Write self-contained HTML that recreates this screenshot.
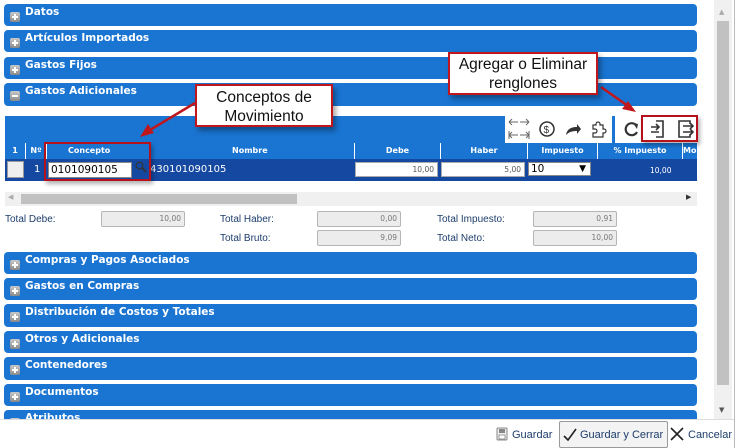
<!DOCTYPE html>
<html><head><meta charset="utf-8"><style>
*{margin:0;padding:0;box-sizing:border-box}
body{width:738px;height:448px;overflow:hidden;background:#fff;position:relative;font-family:"DejaVu Sans",Verdana,sans-serif}
.a{position:absolute}
.p{position:absolute;left:4px;width:693px;height:22px;background:#1a75d2;border-radius:4px;color:#fff;font-weight:bold;font-size:10.5px;padding:2px 0 0 21px}
.p i{position:absolute;left:6px;top:8px;width:10px;height:10px;background:linear-gradient(#c8c8c8,#8a8a8a);border-radius:2px}
.p i:before{content:"";position:absolute;left:2px;top:4px;width:6px;height:2px;background:#fff}
.p i.pl:after{content:"";position:absolute;left:4px;top:2px;width:2px;height:6px;background:#fff}
.th{position:absolute;top:143px;height:16px;color:#fff;font-size:8px;font-weight:bold;text-align:center;line-height:16px;border-right:1px solid #fff}
.in{position:absolute;background:#fff;border:1px solid #aaa;font-size:7.5px;text-align:right;padding-right:3px;line-height:13px;color:#555}
.tl{position:absolute;font-family:"Liberation Sans",sans-serif;font-size:10px;color:#1d3d6b}
.tb{position:absolute;width:84px;height:16px;background:#ececec;border:1px solid #b5b5b5;border-radius:2px;font-size:7.5px;color:#777;text-align:right;padding-right:3px;line-height:14px}
.call{position:absolute;background:#fff;border:2px solid #c0161c;box-shadow:3px 4px 5px rgba(0,0,0,.35);font-family:"Liberation Sans",sans-serif;font-size:15.5px;text-align:center;line-height:19px;color:#111}
</style></head><body>
<div class="p" style="top:4px"><i class="pl"></i>Datos</div>
<div class="p" style="top:30px"><i class="pl"></i>Artículos Importados</div>
<div class="p" style="top:57px"><i class="pl"></i>Gastos Fijos</div>
<div class="p" style="top:83px;height:23px"><i></i>Gastos Adicionales</div>

<div class="a" style="left:5px;top:116px;width:500px;height:27px;background:#1a75d2"></div>
<div class="a" style="left:612px;top:116px;width:3px;height:27px;background:#1a75d2"></div>
<svg class="a" style="left:505px;top:115px" width="192" height="28" viewBox="0 0 192 28" fill="none" stroke="#333" stroke-width="1.5">
<path d="M4 7h9M4 7l3-3M4 7l3 3M15 7h9M24 7l-3-3M24 7l-3 3" stroke="#666" stroke-width="1"/>
<path d="M4 20h9M7 17l-3 3 3 3M4 16v8M15 20h9M21 17l3 3-3 3M24 16v8" stroke="#666" stroke-width="1"/>
<circle cx="42" cy="14" r="7"/><text x="38.5" y="18" font-size="10" fill="#333" stroke="none" font-family="Liberation Sans">$</text>
<path d="M61 20c1-6 5-8 11-8v-3l4 5-4 5v-3c-5 0-8 1-11 4z" fill="#333" stroke="none"/>
<path d="M88 22v-4h2a2 2 0 1 0 0-4h-2v-4h3v-1a2 2 0 1 1 4 0v1h3v4h1a2 2 0 1 1 0 4h-1v4z" stroke-width="1.2"/>
<path d="M131 10a6 6 0 1 0 1 7" stroke-width="2.2"/><path d="M128 8l5 1-1 5z" fill="#333" stroke="none"/>
<path d="M151 6h7v16h-7M146 12h8M151 9l3 3-3 3M146 17h8" stroke-width="1.6"/>
<path d="M185 9v-3h-11v16h11v-3M178 11h10M185 8l3 3-3 3M178 17h10M185 14l3 3-3 3" stroke-width="1.6"/>
</svg>

<div class="a" style="left:5px;top:143px;width:692px;height:16px;background:#1a75d2"></div>
<div class="th" style="left:5px;width:21px">1</div>
<div class="th" style="left:26px;width:21px">Nº</div>
<div class="th" style="left:47px;width:308px;text-align:left;padding-left:21px">Concepto</div>
<div class="a" style="left:232px;top:143px;color:#fff;font-size:8px;font-weight:bold;line-height:16px">Nombre</div>
<div class="th" style="left:355px;width:86px">Debe</div>
<div class="th" style="left:441px;width:87px">Haber</div>
<div class="th" style="left:528px;width:70px">Impuesto</div>
<div class="th" style="left:598px;width:85px">% Impuesto</div>
<div class="th" style="left:683px;width:14px;border:0;text-align:left">Mo</div>

<div class="a" style="left:5px;top:159px;width:692px;height:22px;background:#1548a0"></div>
<div class="a" style="left:7px;top:161px;width:17px;height:17px;background:#eee;border:1px solid #999"></div>
<div class="a" style="left:34px;top:164px;color:#fff;font-size:10px">1</div>
<div class="a" style="left:48px;top:162px;width:84px;height:16px;background:#fff;border:1px solid #888;font-size:10.5px;padding-left:2px;line-height:14px;color:#000">0101090105</div>
<svg class="a" style="left:135px;top:161px" width="12" height="12"><circle cx="4.5" cy="4.5" r="3.3" fill="none" stroke="#333" stroke-width="1.2"/><path d="M7 7l4 4" stroke="#333" stroke-width="1.8"/></svg>
<div class="a" style="left:150px;top:164px;color:#fff;font-size:10px">430101090105</div>
<div class="in" style="left:355px;top:162px;width:83px;height:15px">10,00</div>
<div class="in" style="left:441px;top:162px;width:84px;height:15px">5,00</div>
<div class="a" style="left:528px;top:162px;width:63px;height:14px;background:#fff;border:1px solid #888;font-size:10.5px;line-height:12px;padding-left:2px">10<span style="position:absolute;right:4px;font-size:9px">▼</span></div>
<div class="a" style="left:650px;top:166px;color:#fff;font-size:7.5px">10,00</div>

<div class="a" style="left:5px;top:192px;width:692px;height:14px;background:#f0f0f0"></div>
<div class="a" style="left:21px;top:194px;width:276px;height:10px;background:#c1c1c1"></div>
<div class="a" style="left:8px;top:193px;font-size:7px;color:#aaa">◀</div>
<div class="a" style="left:686px;top:193px;font-size:7px;color:#333">▶</div>

<div class="tl" style="left:5px;top:214px">Total Debe:</div>
<div class="tb" style="left:101px;top:211px">10,00</div>
<div class="tl" style="left:220px;top:214px">Total Haber:</div>
<div class="tb" style="left:317px;top:211px">0,00</div>
<div class="tl" style="left:437px;top:214px">Total Impuesto:</div>
<div class="tb" style="left:533px;top:211px">0,91</div>
<div class="tl" style="left:220px;top:233px">Total Bruto:</div>
<div class="tb" style="left:317px;top:230px">9,09</div>
<div class="tl" style="left:437px;top:233px">Total Neto:</div>
<div class="tb" style="left:533px;top:230px">10,00</div>

<div class="p" style="top:252px"><i class="pl"></i>Compras y Pagos Asociados</div>
<div class="p" style="top:278px"><i class="pl"></i>Gastos en Compras</div>
<div class="p" style="top:304px;height:23px"><i class="pl"></i>Distribución de Costos y Totales</div>
<div class="p" style="top:331px"><i class="pl"></i>Otros y Adicionales</div>
<div class="p" style="top:357px;height:23px"><i class="pl"></i>Contenedores</div>
<div class="p" style="top:384px"><i class="pl"></i>Documentos</div>
<div class="p" style="top:410px"><i class="pl"></i>Atributos</div>

<div class="a" style="left:714px;top:0;width:18px;height:419px;background:#f0f0f0"></div>
<div class="a" style="left:717px;top:21px;width:12px;height:364px;background:#c1c1c1"></div>
<div class="a" style="left:719px;top:8px;font-size:7px;color:#aaa">▲</div>
<div class="a" style="left:719px;top:406px;font-size:7px;color:#555">▼</div>
<div class="a" style="left:734px;top:0;width:1px;height:448px;background:#bbb"></div>

<div class="a" style="left:0;top:419px;width:734px;height:29px;background:#fff;border-top:1px solid #ddd"></div>
<svg class="a" style="left:496px;top:427px" width="12" height="14"><rect x="1" y="1" width="10" height="12" rx="1" fill="#eee" stroke="#888"/><rect x="3" y="2" width="6" height="4" fill="#888"/><rect x="3" y="8" width="6" height="4" fill="#fff" stroke="#888" stroke-width=".8"/></svg>
<div class="tl" style="left:512px;top:429px;font-size:11px">Guardar</div>
<div class="a" style="left:559px;top:421px;width:109px;height:27px;border:1px solid #999;border-radius:2px;background:#f3f3f3"></div>
<svg class="a" style="left:563px;top:428px" width="14" height="14"><path d="M1 8l4 4 8-11" fill="none" stroke="#222" stroke-width="1.6"/></svg>
<div class="tl" style="left:580px;top:429px;font-size:11px">Guardar y Cerrar</div>
<svg class="a" style="left:670px;top:427px" width="14" height="14"><path d="M1 1l12 12M13 1L1 13" stroke="#222" stroke-width="1.6"/></svg>
<div class="tl" style="left:688px;top:429px;font-size:11px">Cancelar</div>

<div class="a" style="left:44px;top:142px;width:107px;height:39px;border:2px solid #b5121b;box-shadow:2px 3px 4px rgba(0,0,0,.3)"></div>
<div class="a" style="left:641px;top:115px;width:57px;height:27px;border:2px solid #b5121b;box-shadow:2px 3px 4px rgba(0,0,0,.3)"></div>
<svg class="a" style="left:0;top:0" width="738" height="448"><g stroke="#c0161c" stroke-width="2.5" fill="#c0161c">
<path d="M195 103L150 130"/><path d="M140 137l8-13 6 9z" stroke="none"/>
<path d="M601 87L628 106"/><path d="M636 112l-14-3 6-8z" stroke="none"/></g></svg>
<div class="call" style="left:195px;top:84px;width:138px;height:43px;padding-top:2px">Conceptos de<br>Movimiento</div>
<div class="call" style="left:448px;top:52px;width:150px;height:43px;padding-top:1px">Agregar o Eliminar<br>renglones</div>
</body></html>
